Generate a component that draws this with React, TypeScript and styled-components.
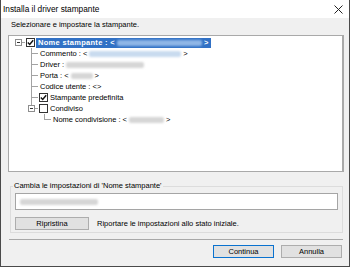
import React from "react";
import styled, { createGlobalStyle } from "styled-components";

const GlobalStyle = createGlobalStyle`
  html, body {
    margin: 0;
    padding: 0;
    background: #ffffff;
  }
  body {
    font-family: "Liberation Sans", Arial, sans-serif;
    color: #000000;
  }
`;

type Conn = "blank" | "tee" | "corner" | "rootMinus" | "cornerMinus";

function Connector({ kind }: { kind: Conn }) {
  return (
    <ConnSvg width={13} height={11} viewBox="0 0 13 11">
      {kind === "tee" && (
        <>
          <line x1={6.5} y1={0} x2={6.5} y2={11} />
          <line x1={6.5} y1={5.5} x2={13} y2={5.5} />
        </>
      )}
      {kind === "corner" && (
        <>
          <line x1={6.5} y1={0} x2={6.5} y2={5.5} />
          <line x1={6.5} y1={5.5} x2={13} y2={5.5} />
        </>
      )}
      {(kind === "rootMinus" || kind === "cornerMinus") && (
        <>
          {kind === "cornerMinus" && <line x1={6.5} y1={0} x2={6.5} y2={2.5} />}
          <line x1={10} y1={5.5} x2={13} y2={5.5} />
          <rect x={3.5} y={2.5} width={6} height={6} fill="#ffffff" stroke="#8e8e8e" />
          <line x1={5} y1={5.5} x2={8} y2={5.5} stroke="#333333" />
        </>
      )}
    </ConnSvg>
  );
}

function CheckBox({ checked }: { checked?: boolean }) {
  return (
    <Box>
      {checked && (
        <svg width={7} height={7} viewBox="0 0 7 7">
          <path d="M0.8 3.6 L2.7 5.5 L6.2 1.2" fill="none" stroke="#111111" strokeWidth={1.4} />
        </svg>
      )}
    </Box>
  );
}

export default function App() {
  return (
    <>
      <GlobalStyle />
      <Window>
        <TitleBar>
          <TitleText>Installa il driver stampante</TitleText>
          <svg width={9} height={9} viewBox="0 0 9 9">
            <path d="M0.5 0.5 L8.5 8.5 M8.5 0.5 L0.5 8.5" stroke="#222222" strokeWidth={1} />
          </svg>
        </TitleBar>
        <Body>
          <Instruction>Selezionare e impostare la stampante.</Instruction>
          <TreeBox>
            <Row>
              <Indent />
              <Connector kind="rootMinus" />
              <CheckBox checked />
              <Label $selected>
                Nome stampante : &lt;
                <Redact $w={85} $tone="blue" />
                &gt;
              </Label>
            </Row>
            <Row>
              <Indent />
              <Connector kind="blank" />
              <Connector kind="tee" />
              <Label>
                Commento : &lt;
                <Redact $w={92} $tone="pale" />
                &gt;
              </Label>
            </Row>
            <Row>
              <Indent />
              <Connector kind="blank" />
              <Connector kind="tee" />
              <Label>
                Driver :
                <Redact $w={78} $tone="gray" />
              </Label>
            </Row>
            <Row>
              <Indent />
              <Connector kind="blank" />
              <Connector kind="tee" />
              <Label>
                Porta : &lt;
                <Redact $w={22} $tone="gray" />
                &gt;
              </Label>
            </Row>
            <Row>
              <Indent />
              <Connector kind="blank" />
              <Connector kind="tee" />
              <Label>Codice utente : &lt;&gt;</Label>
            </Row>
            <Row>
              <Indent />
              <Connector kind="blank" />
              <Connector kind="tee" />
              <CheckBox checked />
              <Label>Stampante predefinita</Label>
            </Row>
            <Row>
              <Indent />
              <Connector kind="blank" />
              <Connector kind="cornerMinus" />
              <CheckBox />
              <Label>Condiviso</Label>
            </Row>
            <Row>
              <Indent />
              <Connector kind="blank" />
              <Connector kind="blank" />
              <Connector kind="corner" />
              <Label>
                Nome condivisione : &lt;
                <Redact $w={35} $tone="gray" />
                &gt;
              </Label>
            </Row>
          </TreeBox>

          <GroupBox>
            <Legend>Cambia le impostazioni di 'Nome stampante'</Legend>
            <Field>
              <Redact $w={78} $tone="gray" />
            </Field>
            <ResetRow>
              <Button $w={74}>Ripristina</Button>
              <Hint>Riportare le impostazioni allo stato iniziale.</Hint>
            </ResetRow>
          </GroupBox>

          <Separator />
          <Footer>
            <Button $w={61} $primary>
              Continua
            </Button>
            <Button $w={61}>Annulla</Button>
          </Footer>
        </Body>
      </Window>
    </>
  );
}

const Window = styled.div`
  width: 350px;
  height: 267px;
  box-sizing: border-box;
  border: 1px solid #4a4a4a;
  border-top: none;
  display: flex;
  flex-direction: column;
  background: #f0f0f0;
`;

const TitleBar = styled.div`
  height: 18px;
  flex: none;
  background: #ffffff;
  display: flex;
  align-items: center;
  justify-content: space-between;
  padding: 0 6px 0 2px;
`;

const TitleText = styled.span`
  font-size: 8.3px;
  color: #000000;
`;

const Body = styled.div`
  flex: 1;
  display: flex;
  flex-direction: column;
  padding: 0 5px 0 7px;
  font-size: 7.5px;
`;

const Instruction = styled.div`
  margin-top: 2px;
  padding-left: 3px;
  line-height: 10px;
`;

const TreeBox = styled.div`
  margin-top: 5px;
  height: 137px;
  box-sizing: border-box;
  background: #ffffff;
  border: 1px solid #a9a9a9;
  border-right-width: 2px;
  padding-top: 1px;
  display: flex;
  flex-direction: column;
`;

const Row = styled.div`
  height: 11px;
  display: flex;
  align-items: center;
  white-space: nowrap;
`;

const Indent = styled.span`
  width: 3px;
  flex: none;
`;

const ConnSvg = styled.svg`
  flex: none;
  display: block;
  stroke: #a3a3a3;
  stroke-width: 1;
  shape-rendering: crispEdges;
`;

const Box = styled.span`
  width: 9px;
  height: 9px;
  flex: none;
  box-sizing: border-box;
  margin-left: 1px;
  border: 1px solid #333333;
  background: #ffffff;
  display: flex;
  align-items: center;
  justify-content: center;
`;

const Label = styled.span<{ $selected?: boolean }>`
  display: flex;
  align-items: center;
  height: 10px;
  margin-left: ${(p) => (p.$selected ? "1px" : "2px")};
  padding: 0 ${(p) => (p.$selected ? "2px" : "0")};
  background: ${(p) => (p.$selected ? "#3171c5" : "transparent")};
  color: ${(p) => (p.$selected ? "#ffffff" : "#000000")};
  font-weight: ${(p) => (p.$selected ? "bold" : "normal")};
  letter-spacing: ${(p) => (p.$selected ? "0.3px" : "0")};
`;

const toneColors: Record<string, string> = {
  blue: "#8fb6e6",
  pale: "#c9dbef",
  gray: "#d6d6d6",
};

const Redact = styled.span<{ $w: number; $tone: "blue" | "pale" | "gray" }>`
  display: inline-block;
  width: ${(p) => p.$w}px;
  height: 6px;
  margin: 0 2px;
  border-radius: 2px;
  background: ${(p) => toneColors[p.$tone]};
  filter: blur(0.8px);
`;

const GroupBox = styled.fieldset`
  margin: 9px 1px 0 2px;
  padding: 0 4px 2px 2px;
  border: 1px solid #dcdcdc;
  min-width: 0;
`;

const Legend = styled.legend`
  padding: 0 1px;
  line-height: 10px;
  font-size: 7.5px;
`;

const Field = styled.div`
  margin: 2px 0 0 2px;
  height: 17px;
  box-sizing: border-box;
  background: #ffffff;
  border: 1px solid #a5a5a5;
  display: flex;
  align-items: center;
  padding-left: 2px;
`;

const ResetRow = styled.div`
  margin: 7px 0 0 2px;
  display: flex;
  align-items: center;
  gap: 8px;
`;

const Button = styled.button<{ $w: number; $primary?: boolean }>`
  width: ${(p) => p.$w}px;
  height: 13px;
  padding: 0;
  box-sizing: border-box;
  font-family: "Liberation Sans", Arial, sans-serif;
  font-size: 7.5px;
  color: #000000;
  background: #e1e1e1;
  border: 1px solid ${(p) => (p.$primary ? "#0a72cf" : "#adadad")};
  line-height: 11px;
`;

const Hint = styled.span`
  white-space: nowrap;
`;

const Separator = styled.div`
  margin: 6px 1px 0 1px;
  height: 0;
  border-top: 1px solid #a8a8a8;
`;

const Footer = styled.div`
  margin-top: 5px;
  padding-right: 2px;
  display: flex;
  justify-content: flex-end;
  gap: 7px;
`;
